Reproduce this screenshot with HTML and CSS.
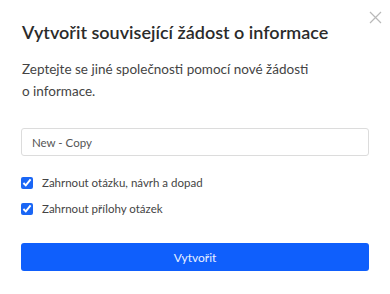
FILE: index.html
```html
<!DOCTYPE html>
<html lang="cs">
  <head>
    <meta charset="UTF-8" />
    <meta name="viewport" content="width=device-width, initial-scale=1" />
    <title>Vytvořit související žádost</title>
    <link rel="stylesheet" href="styles.css">
  </head>
  <body>
    <div class="modal">
      <button class="close" aria-label="Zavřít">
        <svg width="13" height="13" viewBox="0 0 13 13">
          <path d="M1 1L12 12M12 1L1 12" stroke="#b9b9b9" stroke-width="1.2" fill="none" />
        </svg>
      </button>
      <h2 class="title">Vytvořit související žádost o informace</h2>
      <p class="desc">Zeptejte se jiné společnosti pomocí nové žádosti<br />o informace.</p>
      <input class="name" type="text" value="New - Copy" />
      <div class="checks">
        <label class="check"><input type="checkbox" checked /> Zahrnout otázku, návrh a dopad</label>
        <label class="check"><input type="checkbox" checked /> Zahrnout přílohy otázek</label>
      </div>
      <button class="submit">Vytvořit</button>
    </div>
  </body>
</html>
```

FILE: styles.css
```css
body {
  margin: 0;
  background: #fff;
  font-family: Lato, "Liberation Sans", sans-serif;
  color: #333;
}
.modal {
  position: relative;
  padding: 20px 21px 20px 21px;
}
.close {
  position: absolute;
  top: 11px;
  right: 8px;
  border: 0;
  background: none;
  padding: 0;
  width: 13px;
  height: 13px;
}
.title {
  margin: 0 0 0 1px;
  font-size: 18px;
  font-weight: 600;
  line-height: 24px;
  color: #2b2b2b;
}
.desc {
  margin: 14px 0 0 1px;
  font-size: 13.5px;
  line-height: 22px;
  color: #444;
}
.name {
  display: block;
  box-sizing: border-box;
  width: 100%;
  height: 28px;
  margin-top: 26px;
  padding: 0 10px;
  border: 1px solid #dcdcdc;
  border-radius: 3px;
  font-family: inherit;
  font-size: 11.5px;
  color: #555;
}
.checks {
  display: flex;
  flex-direction: column;
  gap: 10px;
  margin-top: 19px;
}
.check {
  display: flex;
  align-items: center;
  gap: 9px;
  font-size: 11.5px;
  line-height: 16px;
  color: #444;
}
.check input {
  margin: 0;
  width: 12px;
  height: 12px;
  accent-color: #1a66f5;
}
.submit {
  display: block;
  width: 100%;
  height: 28px;
  margin-top: 26px;
  border: 0;
  border-radius: 3px;
  background: #0f5ffc;
  color: #e8efff;
  font-family: inherit;
  font-size: 12px;
}
```
